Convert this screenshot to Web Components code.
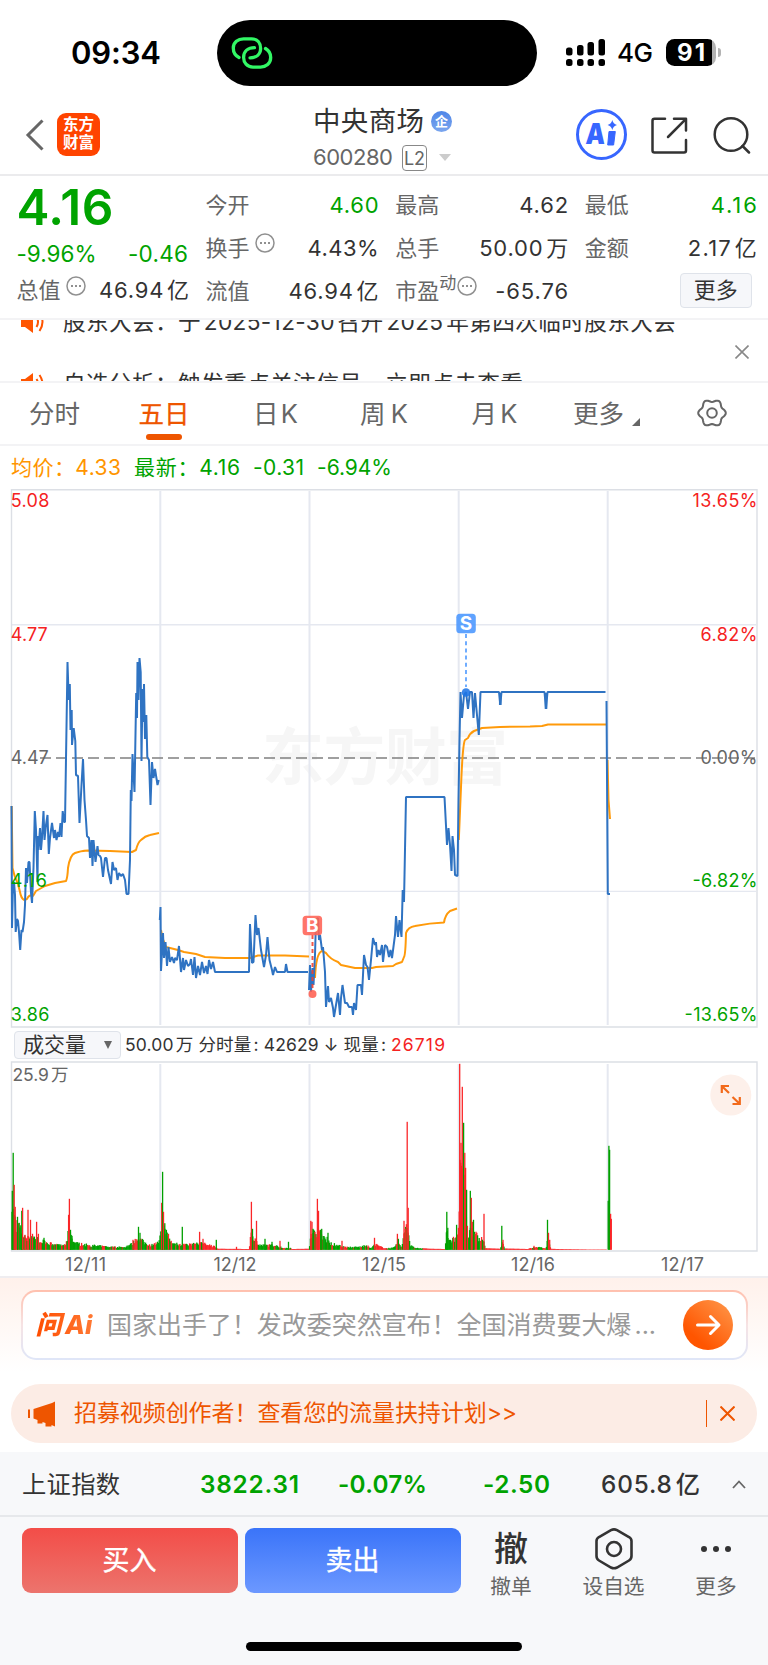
<!DOCTYPE html>
<html lang="zh-CN">
<head>
<meta charset="utf-8">
<title>中央商场 600280</title>
<style>
  body {
    margin: 0;
    width: 768px;
    background: #fff;
    font-family: Inter, "Noto Sans CJK SC", sans-serif;
    color: #333;
    text-autospace: normal;
  }
</style>
</head>
<body>
<stock-page></stock-page>

<script>
(function() {
  function define(name, html, connected) {
    var template = document.createElement('template');
    template.innerHTML = html;
    customElements.define(name, class extends HTMLElement {
      connectedCallback() {
        if (this.shadowRoot) return;
        var root = this.attachShadow({mode: 'open'});
        root.appendChild(document.importNode(template.content, true));
        if (connected) connected.call(this, root);
      }
    });
  }

  // inline text tracked out (or in) to a fixed width
  define('fit-text', `
    <style>
      :host { display: inline-block; white-space: nowrap; flex: none; }
      span { display: inline-block; }
    </style>
    <span><slot></slot></span>
  `, function(root) {
    var span = root.querySelector('span');
    var w = +this.getAttribute('w');
    var n = this.textContent.length;
    var gap = (w - span.getBoundingClientRect().width) / (n - 1);
    span.style.letterSpacing = gap.toFixed(3) + 'px';
    span.style.marginRight = (-gap).toFixed(3) + 'px';
    this.style.width = w + 'px';
  });

  define('status-bar', `
    <style>
      :host { display: flex; align-items: center; height: 93px; padding-top: 12px; box-sizing: border-box; color: #000; }
      .time { font-size: 31px; font-weight: 600; margin-left: 71px; width: 146px; line-height: 81px; }
      .island { width: 320px; height: 66px; border-radius: 33px; background: #000; display: flex; align-items: center; margin-top: 1px; }
      .island svg { margin-left: 13px; }
      .signal { margin-left: 28px; }
      .net { font-size: 26px; font-weight: 500; margin-left: 12px; width: 49px; }
      .battery { width: 50px; height: 27px; border-radius: 8.5px; background: linear-gradient(90deg, #000 46px, #b3b3b3 46px); color: #fff; font-size: 24px; font-weight: 700; line-height: 27px; }
      .battery fit-text { margin-left: 11px; }
      .nub { width: 3px; height: 9px; margin-left: 2px; border-radius: 0 4px 4px 0; background: #b3b3b3; }
    </style>
    <div class="time"><fit-text w="90">09:34</fit-text></div>
    <div class="island">
      <svg width="44" height="36" viewBox="230 35 44 36" fill="none" stroke="#32f765" stroke-width="3.3" stroke-linecap="round">
        <path d="M239 57.500C235 55.500 233.300 52 233.300 48C233.300 42.500 238 38.800 243.500 38.800H251.500C257.500 38.800 260.600 43 260.600 48.500C260.600 54 256.500 57.800 250 57.800"/>
        <path d="M265.500 48.500C269 50.500 270.700 53.500 270.700 57.500C270.700 63.500 266 67.100 260.500 67.100H253C247 67.100 243.600 62.500 243.600 57.500C243.600 51.500 248 47.700 254.500 47.700"/>
      </svg>
    </div>
    <svg class="signal" width="40" height="28" viewBox="565 38 40 28">
      <rect x="566" y="46.500" width="6.500" height="8" rx="2.500"/><rect x="577" y="44" width="6.500" height="10.500" rx="2.500"/>
      <rect x="587.500" y="41" width="6.500" height="13.500" rx="2.500"/><rect x="598.500" y="38" width="6.500" height="16.500" rx="2.500"/>
      <rect x="566" y="58" width="6.500" height="7" rx="2.500"/><rect x="577" y="58" width="6.500" height="7" rx="2.500"/>
      <rect x="587.500" y="58" width="6.500" height="7" rx="2.500"/><rect x="598.500" y="58" width="6.500" height="7" rx="2.500"/>
    </svg>
    <div class="net"><fit-text w="36">4G</fit-text></div>
    <div class="battery"><fit-text w="28">91</fit-text></div>
    <div class="nub"></div>
  `);

  define('stock-header', `
    <style>
      :host { display: flex; height: 83px; box-sizing: border-box; border-bottom: 2px solid #ebebed; }
      .left { width: 313px; display: flex; align-items: flex-start; padding-top: 20px; box-sizing: border-box; }
      .back { margin: 6px 13px 0 25px; }
      .logo { width: 43px; height: 43px; border-radius: 9px; background: #ff4400; color: #fff; font-size: 15.5px; font-weight: 700; line-height: 18px; text-align: center; padding-top: 3px; box-sizing: border-box; }
      .mid { flex: 1; }
      .name { display: flex; align-items: center; height: 28px; margin-top: 14px; font-size: 27.500px; color: #333; line-height: 28px; }
      .badge { width: 21px; height: 21px; border-radius: 50%; margin-left: 7px; background: linear-gradient(#4f86e8, #7ba6ee); color: #fff; font-size: 13px; font-weight: 700; line-height: 21px; text-align: center; }
      .code { display: flex; align-items: center; height: 27px; margin-top: 9px; font-size: 22px; color: #666; line-height: 27px; }
      .l2 { width: 23px; height: 24px; border: 1.5px solid #888; border-radius: 4px; margin: 0 12px 0 9px; font-size: 18px; line-height: 25px; text-align: center; }
      .tri { border: 6px solid transparent; border-top: 7px solid #ccc; border-bottom: 0; }
      .right { display: flex; align-items: flex-start; padding: 16px 17px 0 0; }
      .ai { width: 45px; height: 45px; border: 3px solid #3766ff; border-radius: 50%; margin-right: 24px; }
      .share { margin: 8px 25px 0 0; } .search { margin-top: 7px; }
    </style>
    <div class="left">
      <svg class="back" width="19" height="32" fill="none" stroke="#666" stroke-width="3"><path d="M17.500 1.500L3 16L17.500 30.500"/></svg>
      <div class="logo">东方<br>财富</div>
    </div>
    <div class="mid">
      <div class="name"><fit-text w="111">中央商场</fit-text><span class="badge">企</span></div>
      <div class="code"><fit-text w="80">600280</fit-text><span class="l2">L2</span><span class="tri"></span></div>
    </div>
    <div class="right">
      <div class="ai">
        <svg width="45" height="45" viewBox="0 0 45 45" fill="#3766ff">
          <text x="6.500" y="32.500" font-family="Inter" font-size="29" font-weight="900" textLength="19.500" lengthAdjust="spacingAndGlyphs" transform="skewX(-3) translate(1.500 0)">A</text>
          <path d="M30 19.500H36.300L34.600 33H28.700Z" stroke="#3766ff" stroke-linejoin="round"/>
          <path d="M33.300 8Q34.200 12.100 38 13Q34.200 13.900 33.300 18Q32.400 13.900 28.600 13Q32.400 12.100 33.300 8Z"/>
        </svg>
      </div>
      <svg class="share" width="37" height="37" fill="none" stroke="#333" stroke-width="2.500" stroke-linejoin="round" stroke-linecap="round">
        <path d="M14 1.800H3.500Q1.500 1.800 1.500 3.800V33.500Q1.500 35.500 3.500 35.500H33Q35 35.500 35 33.500V23M23 1.800H35V13.500M35 1.800L17 20"/>
      </svg>
      <svg class="search" width="38" height="38" fill="none" stroke="#333" stroke-width="2.500" stroke-linecap="round"><circle cx="18" cy="18.500" r="16.300"/><path d="M29.500 30L36 36.500"/></svg>
    </div>
  `);

  // dotted info bubble beside some labels
  define('info-dot', `
    <style>:host { display: block; width: 20px; height: 20px; } svg { display: block; }</style>
    <svg width="20" height="20" fill="none" stroke="#909090" stroke-width="1.500"><circle cx="10" cy="10" r="9"/><path d="M5 10H7M9 10H11M13 10H15" stroke-width="2"/></svg>
  `);

  define('quote-cell', `
    <style>
      :host { display: flex; align-items: center; height: 43px; font-size: 22px; line-height: 30px; color: #333; white-space: nowrap; }
      .label { color: #666; display: flex; align-items: center; }
      .value { margin-left: auto; margin-right: -1px; }
      :host([down]) .value { color: #00a300; }
    </style>
    <div class="label"><slot name="label"></slot></div>
    <div class="value"><slot></slot></div>
  `);

  define('quote-panel', `
    <style>
      :host { display: grid; grid-template-columns: 171.500px 172px 172px 171px; column-gap: 17.600px; height: 144px; padding: 7px 0 0 16.500px; box-sizing: border-box; border-bottom: 2px solid #f3f3f5; }
      .price { font-size: 49.500px; font-weight: 600; color: #00a300; height: 48px; line-height: 48px; }
      .diff { display: flex; justify-content: space-between; color: #00a300; font-size: 22.500px; height: 45px; line-height: 45px; }
      .total { height: 28px; }
      info-dot { margin: -9px 0 0 5px; }
      sup { font-size: 17px; line-height: 20px; margin-top: -16px; vertical-align: baseline; }
      sup + info-dot { margin-left: 1px; }
      .more { display: flex; justify-content: flex-end; height: 43px; align-items: center; padding-right: 4px; }
      .more span { width: 70px; height: 33px; border: 1.500px solid #dfe3ea; border-radius: 4px; background: #f6f7fa; text-align: center; font-size: 22px; line-height: 32px; }
    </style>
    <div>
      <div class="price"><fit-text w="97">4.16</fit-text></div>
      <div class="diff"><fit-text w="80">-9.96%</fit-text><fit-text w="60">-0.46</fit-text></div>
      <quote-cell class="total"><span slot="label">总值</span><info-dot slot="label"></info-dot><fit-text w="90">46.94亿</fit-text></quote-cell>
    </div>
    <div>
      <quote-cell down><span slot="label">今开</span><fit-text w="49">4.60</fit-text></quote-cell>
      <quote-cell><span slot="label">换手</span><info-dot slot="label"></info-dot><fit-text w="71">4.43%</fit-text></quote-cell>
      <quote-cell><span slot="label">流值</span><fit-text w="90">46.94亿</fit-text></quote-cell>
    </div>
    <div>
      <quote-cell><span slot="label">最高</span><fit-text w="49">4.62</fit-text></quote-cell>
      <quote-cell><span slot="label">总手</span><fit-text w="89">50.00万</fit-text></quote-cell>
      <quote-cell><span slot="label">市盈</span><sup slot="label">动</sup><info-dot slot="label"></info-dot><fit-text w="73">-65.76</fit-text></quote-cell>
    </div>
    <div>
      <quote-cell down><span slot="label">最低</span><fit-text w="46">4.16</fit-text></quote-cell>
      <quote-cell><span slot="label">金额</span><fit-text w="69">2.17亿</fit-text></quote-cell>
      <div class="more"><span>更多</span></div>
    </div>
  `);

  // two headlines caught half way through the vertical scroll
  define('news-ticker', `
    <style>
      :host { display: flex; height: 63px; box-sizing: border-box; border-bottom: 2px solid #f3f3f5; overflow: hidden; font-size: 22.700px; color: #333; }
      .list { flex: 1; margin-top: -16px; height: 95px; }
      .row { display: flex; align-items: center; height: 36px; padding-left: 20px; margin-bottom: 26px; white-space: nowrap; line-height: 36px; }
      .row svg { margin-right: 18px; }
      .close { margin: 25px 19px 0 0; }
    </style>
    <div class="list">
      <div class="row"><svg width="25" height="24"><path d="M1 7H5L13 1V23L5 17H1Z" fill="#ff5500"/><path d="M16.500 7Q19.500 12 16.500 17M19.500 3Q25.500 12 19.500 21" fill="none" stroke="#ff5500" stroke-width="2"/></svg><fit-text w="613">股东大会：于2025-12-30召开2025年第四次临时股东大会</fit-text></div>
      <div class="row"><svg width="25" height="24"><path d="M1 7H5L13 1V23L5 17H1Z" fill="#ff5500"/><path d="M16.500 7Q19.500 12 16.500 17M19.500 3Q25.500 12 19.500 21" fill="none" stroke="#ff5500" stroke-width="2"/></svg><fit-text w="460">自选分析：触发重点关注信号，立即点击查看</fit-text></div>
    </div>
    <svg class="close" width="14" height="14" stroke="#888" stroke-width="1.600"><path d="M.5.5L13.500 13.500M13.500.5L.5 13.500"/></svg>
  `);

  define('period-tabs', `
    <style>
      :host { display: grid; grid-template-columns: 109px 110px 113px 104px 117px 107px 1fr; height: 63px; box-sizing: border-box; border-bottom: 2px solid #f3f3f5; font-size: 25.500px; color: #666; line-height: 61px; }
      div { text-align: center; white-space: nowrap; }
      .on { color: #ee5500; -webkit-text-stroke: .3px #ee5500; display: flex; flex-direction: column; align-items: center; }
      .on::after { content: ""; width: 36px; height: 6px; border-radius: 3px; background: #ee5500; margin-top: -10px; }
      .more { display: flex; justify-content: center; }
      i { width: 0; height: 0; border-left: 8px solid transparent; border-bottom: 8px solid #666; margin: 35px 0 0 8px; }
      svg { margin: 15px 0 0 37px; }
    </style>
    <div>分时</div><div class="on"><span>五日</span></div>
    <div><fit-text w="45">日K</fit-text></div><div><fit-text w="48">周K</fit-text></div><div><fit-text w="46">月K</fit-text></div>
    <div class="more">更多<i></i></div>
    <svg width="30" height="30" viewBox="-15 -15 30 30" fill="none" stroke="#666" stroke-width="2"><circle r="4.800"/><path id="gear" stroke-linejoin="round"/></svg>
  `, function(root) {
    // six soft lobes
    var d = '';
    for (var a = 0; a <= 360; a += 6) {
      var r = 12.4 + 1.4 * Math.cos(6 * a * Math.PI / 180);
      d += (a ? 'L' : 'M') + (r * Math.cos(a * Math.PI / 180)).toFixed(2) + ' ' + (r * Math.sin(a * Math.PI / 180)).toFixed(2);
    }
    root.querySelector('#gear').setAttribute('d', d + 'Z');
  });

  define('price-legend', `
    <style>
      :host { display: flex; align-items: center; height: 43px; padding-left: 11px; font-size: 21px; color: #00a300; line-height: 43px; }
      .avg { color: #ff9500; }
      fit-text { margin-right: 13px; }
    </style>
    <fit-text class="avg" w="110">均价：4.33</fit-text><fit-text w="106">最新：4.16</fit-text><fit-text w="51">-0.31</fit-text><fit-text w="75">-6.94%</fit-text>
  `);

  define('price-chart', `
    <style>
      :host { display: block; height: 541px; }
      svg { display: block; font-family: Inter, "Noto Sans CJK SC", sans-serif; font-size: 18px; }
      .grid { stroke: #e5e8f0; stroke-width: 2; fill: none; }
      .grid.thin { stroke-width: 1.400; }
      .frame { stroke: #dcdfe5; stroke-width: 1.400; fill: none; }
      .up { fill: #f52222; } .down { fill: #00a300; } .flat { fill: #666; }
      .blue { stroke: #2f73c2; } .avg { stroke: #ff9a0a; }
      .blue, .avg { fill: none; stroke-width: 2; stroke-linejoin: bevel; }
    </style>
    <svg width="768" height="541" viewBox="0 489 768 541">
      <text x="262" y="780" font-size="62" font-weight="700" fill="#f6f6f6" textLength="246">东方财富</text>
      <path class="grid" d="M160.300 491V1025M309.500 491V1025M458.700 491V1025M607.700 491V1025"/>
      <path class="grid thin" d="M12 624.700H756M12 891.400H756"/>
      <path class="frame" d="M11.500 489.700H757V1027H11.500Z"/>
      <path d="M40 758H757" stroke="#808080" stroke-width="1.600" stroke-dasharray="11 5"/>
      <path class="avg" d="M11.700 806L12.500 868Q14 876 18 884L20 892Q21 898 24 900L27 899Q29 894 33 896L36 891L45 886L55 883L66 881Q67.500 878 68 868Q70 855 75 853Q80 851 88 850.500L110 851L132 852L136 850Q138 842 141 840Q145 836 150 835L159 833"/>
      <path class="avg" d="M161 930L162.500 938L166 947L178 950L184 952L196 954L205 957L225 958L250 958L258 955.500L285 955.500L309 956.500M315 978Q316 953 322 951L326 953Q330 959 338 962L341 965L355 968L372 968L376 967L393 966L396 964L402 962L404 957Q405.500 955 406 933Q408 927 415 926Q430 923 444 922.500Q445 915 450 911L457 908.500M458.800 840L461.500 775Q463 743 465 740L468 738Q470 733 474 731L482 728L500 727L530 726.500L542 726L548 724.500L606 724.500M607.500 760L608.500 800L610 819"/>
      <path class="blue" d="M11.500 806L12 928L13 884L14 882L15 895L15.700 932L17 919L18 921L19 932L20.200 950L21.500 930L22.500 932L24 922L25 905L26 868L27 883L28.500 862L29.500 862L31 893L32 903L33.500 868L34.800 811L36 830L37.500 882L38 836L38.500 850L40 828L41 850L42 838L43.500 811L44.500 840L46 825L47.500 815L48.800 854L50 838L52 823L54 838L55 830L56.500 840L58 832L59 837L60.500 823L61.500 837L62.700 811L64 822L65 822L66.300 740L67.500 662L68.700 700L69.800 684L70.500 730L71.700 710L72 745L73.700 728L75.300 741L76 775L78 776L79.500 823L81.500 785L83 759L84.500 800L86 820L87 836L89 838L90 858L91.500 840L92.500 866L93.500 840L95.500 862L97.500 846L98.500 855L100 856L101 858L103 877L105 858L106.500 858L108 870L111 884L112.500 862L114 870L116 868L117.500 880L119 873L121 876L123 874L125 880L126.500 894L128.500 894L130 860L130.800 790L131.500 801L132.500 754L134.500 792L136.200 693L137 718L137.500 662L138.500 700L139.500 658L140.700 672L141.500 761L142.500 689L143.500 722L144 684L145 739L146.300 715L147.300 757L149 760L150.500 805L152 762L153.500 778L155 769L157.500 785L158.700 780"/>
      <path class="blue" d="M159.800 920L160.500 907L161 971L163 933L164 958L165.500 942L167 966L168.500 947L170 962L172 957L174 963L175 958L177 960L179 946L181 972L183 958L184 970L186 960L188 966L190 964L191 959L193 975L194.500 957L196 978L198 966L200 975L202 962L204 973L206 966L207.500 974L209 960L211 969L213 962L215 972L249 972L250 924L252 963L253.500 962L255.500 915L257 935L258.500 928L261 950L264 967L266 955L267.500 937L269.500 960L272 970L273 975L275 967L277 972L285 972L286 964L287.500 972L308 972"/>
      <path class="blue" d="M309 990L310 965L311 992L312.500 968L313.500 985L315 955L316 920L318 918L319 940L320 935L322 950L323 947L325 972L326 1007L328 986L329 1002L331 998L333 1008L334 1017L336 1005L338 993L340 1015L341 998L342.500 985L345 1003L347 1003L349 1007L352 1007L353 1015L354 1003L356 1010L357.500 985L361 985L362 995L364 955L366 965L367.500 967L369 980L371 960L373 938L375 945L376 942L377 957L378.500 950L380 955L382 945L383 962L385 945L387 947L389 957L390.500 950L392 958L395 935L396 916L398 937L399.500 920L401.500 937L402.700 890L404 902L406 797L444.500 797L447 845L448.500 828L450 845L451.500 871L452.500 836L454 850L455 875L457.500 876L458.500 800L459.500 740L460.500 692L462 718L464 695L466 692L468 709L470 692L472 692L473.500 718L475 693L478.800 735L480.500 692L499 692L500.300 705L501.500 692L544.500 692L546 709L547.500 692L605.500 692M606.500 701L607.800 894L610 894"/>
      <path d="M500.200 693V705M546 693V709" stroke="#2f73c2" stroke-width="2.500"/>
      <g opacity=".88">
        <path d="M466 634V687" stroke="#4a97ff" stroke-width="1.800" stroke-dasharray="4 3.200"/>
        <circle cx="466" cy="692.500" r="4.300" fill="#1f76e6"/>
        <rect x="456.300" y="613.700" width="19.500" height="19.500" rx="3.500" fill="#4a97ff"/>
        <path d="M312.500 935V990" stroke="#f0402f" stroke-width="2" stroke-dasharray="4 3"/>
        <circle cx="312.500" cy="994" r="4" fill="#ff5f50"/>
        <rect x="302.600" y="915.700" width="19.500" height="19.500" rx="3.500" fill="#ff6355"/>
      </g>
      <g fill="#fff" font-weight="700" font-size="19" text-anchor="middle"><text x="466" y="630.300">S</text><text x="312.300" y="932.300">B</text></g>
      <g class="up"><text x="10.800" y="507" textLength="38.500">5.08</text><text x="10.800" y="641" textLength="37">4.77</text></g>
      <text class="flat" x="10.800" y="764" textLength="38">4.47</text>
      <g class="down"><text x="10.800" y="886.500" textLength="36">4.16</text><text x="10.800" y="1020.500" textLength="38.500">3.86</text></g>
      <g text-anchor="end"><text class="up" x="757.500" y="507" textLength="65">13.65%</text><text class="up" x="757.500" y="641" textLength="57">6.82%</text><text class="flat" x="757.500" y="764" textLength="57">0.00%</text><text class="down" x="757.500" y="886.500" textLength="65">-6.82%</text><text class="down" x="757.500" y="1020.500" textLength="73">-13.65%</text></g>
    </svg>
  `);

  define('volume-toolbar', `
    <style>
      :host { display: flex; align-items: center; height: 30px; padding-left: 14px; font-size: 17.500px; white-space: nowrap; color: #333; line-height: 28px; }
      .pick { display: flex; align-items: center; justify-content: space-between; width: 107px; height: 28px; box-sizing: border-box; border: 1.500px solid #dfe3ea; border-radius: 4px; background: #f6f7fa; padding: 0 8px 0 8px; margin-right: 4px; font-size: 21px; margin-top: -1px; }
      i { border: 4.500px solid transparent; border-top: 8px solid #666; border-bottom: 0; }
      .now { color: #f52222; margin-left: 5px; }
    </style>
    <div class="pick">成交量<i></i></div><fit-text w="261">50.00万 分时量: 42629 ↓ 现量:</fit-text><fit-text class="now" w="54">26719</fit-text>
  `);

  // [x, height, colour]: tall bars first, the low rest follows the envelope
  var SPIKES = [
    [12.3, 59, 'g'], [13.2, 97, 'g'], [14.2, 65, 'r'], [15.2, 43, 'r'], [17.5, 33, 'g'], [21.8, 39, 'g'], [22.6, 42, 'r'], [25, 15, 'r'], [28, 40, 'r'], [30.5, 30, 'r'], [32.5, 16, 'r'], [36.6, 28, 'r'], [38.4, 16, 'r'], [44, 12, 'g'], [68.6, 35, 'r'], [69.4, 51, 'r'], [70.5, 20, 'g'], [72, 14, 'g'],
    [133, 10, 'r'], [138.5, 23, 'g'], [140, 17, 'g'], [161.7, 47, 'r'], [162.6, 78, 'g'], [163.5, 38, 'r'], [165, 21, 'g'], [168.5, 16, 'r'], [182.3, 23, 'g'], [199.6, 18, 'r'], [203, 11, 'r'], [216.3, 10, 'g'], [236.5, 3, 'r'], [251.4, 48, 'r'], [252.5, 21, 'g'], [256.5, 29, 'r'], [265, 11, 'g'], [272, 8, 'g'], [280, 9, 'r'], [288.5, 8, 'g'],
    [310.8, 29, 'r'], [312, 28, 'r'], [313, 21, 'g'], [315, 18, 'r'], [317.4, 51, 'r'], [318.5, 39, 'r'], [320.7, 20, 'g'], [321.7, 21, 'g'], [328, 17, 'g'], [342, 9, 'r'], [374.5, 12, 'r'], [397.4, 16, 'r'], [398.4, 11, 'g'], [404, 29, 'r'], [405.2, 21, 'r'], [407.2, 128, 'r'], [408.2, 42, 'r'], [446.8, 38, 'g'], [447.8, 22, 'g'], [453.5, 13, 'r'], [456.6, 25, 'g'], [458.4, 22, 'r'],
    [459.7, 186, 'r'], [461, 107, 'r'], [462.3, 163, 'r'], [463.6, 127, 'g'], [464.8, 97, 'r'], [465.6, 82, 'r'], [466.6, 60, 'g'], [467.4, 24, 'r'], [470.3, 59, 'g'], [471.3, 52, 'r'], [472.3, 28, 'r'], [473.5, 30, 'g'], [484, 36, 'r'], [501.8, 24, 'g'], [503, 10, 'r'], [534, 4, 'r'], [547.5, 30, 'g'], [548.5, 17, 'r'], [549.7, 10, 'r'],
    [608.2, 49, 'g'], [608.9, 104, 'g'], [609.6, 100, 'g'], [610.6, 36, 'r'], [611.3, 31, 'r']
  ];
  var ENVELOPE = [
    [12, 50], [15, 32], [18, 26], [21, 22], [24, 13], [30, 15], [36, 13], [44, 9], [50, 7], [58, 5], [66, 5], [69, 25], [72, 14], [76, 7], [90, 5], [112, 3], [124, 3], [133, 7], [138, 14], [143, 9], [150, 5], [159, 8], [163, 32], [168, 13], [173, 7], [182, 6], [184, 6], [192, 6], [204, 7], [212, 4], [215, 4], [217.5, 1], [249, .8], [251, 18], [254, 14], [259, 5], [275, 5], [284, 2], [290, 2], [292, .8], [309, 1], [311, 18], [318, 20], [325, 14], [331, 7], [345, 3], [358, 3], [366, 5], [371, 2], [375, 6], [384, 2], [393, 2], [397, 8], [402, 3], [407, 35], [410, 6], [416, 2], [430, 1], [445, .8], [446.5, 22], [450, 11], [456, 12], [459, 20], [460, 90], [464, 75], [468, 15], [470, 20], [474, 18], [480, 13], [484, 11], [485.5, 1.500], [500, 1], [502, 8], [505, 1.200], [528, .8], [534, 3], [546, 2], [548, 12], [551, 1], [560, .7], [590, .3], [607, .3]
  ];

  define('volume-chart', `
    <style>
      :host { display: block; height: 218px; }
      svg { display: block; font-family: Inter, "Noto Sans CJK SC", sans-serif; font-size: 18px; fill: #666; }
      .grid { stroke: #e5e8f0; stroke-width: 2; fill: none; }
      .frame { stroke: #dcdfe5; stroke-width: 1.400; fill: none; }
      .r { fill: #fa2628; } .g { fill: #00a000; }
    </style>
    <svg width="768" height="218" viewBox="0 1060 768 218">
      <path class="grid" d="M160.300 1064V1249M309.500 1064V1249M458.700 1064V1249M607.700 1064V1249"/>
      <path class="frame" d="M11.500 1062H757V1251H11.500Z"/>
      <g id="bars"></g>
      <text x="12.500" y="1081" font-size="17.500" textLength="56">25.9万</text>
      <g text-anchor="middle"><text x="85.500" y="1270.500" textLength="41">12/11</text><text x="235" y="1270.500" textLength="43">12/12</text><text x="384" y="1270.500" textLength="44">12/15</text><text x="533" y="1270.500" textLength="44">12/16</text><text x="682.500" y="1270.500" textLength="43">12/17</text></g>
      <path d="M0 1277H768" stroke="#efedf0" stroke-width="2"/>
      <circle cx="730.800" cy="1095" r="20.500" fill="#fdf0ea"/>
      <path d="M721.800 1093V1086H729M722 1086.200L729 1093M739.800 1097V1104H732.500M739.600 1103.800L732.500 1097" fill="none" stroke="#f26a1b" stroke-width="2.200"/>
    </svg>
  `, function(root) {
    var seed = 7, out = '', k = 0, c = 'g';
    function rnd() { seed = (seed * 16807) % 2147483647; return seed / 2147483647; }
    function bar(x, h, c, w) {
      out += '<rect class="' + c + '" x="' + (x - w / 2).toFixed(2) + '" y="' + (1249.8 - h).toFixed(1) + '" width="' + w + '" height="' + h.toFixed(1) + '"/>';
    }
    for (var x = 12; x < 607; x += 0.8) {
      while (k < ENVELOPE.length - 2 && ENVELOPE[k + 1][0] < x) k++;
      var a = ENVELOPE[k], b = ENVELOPE[k + 1];
      var h = a[1] + (b[1] - a[1]) * Math.max(0, (x - a[0]) / (b[0] - a[0]));
      // thin trading at the limit price is nearly all on the buy side
      if (rnd() < 0.5) c = rnd() < 0.38 ? 'r' : 'g';
      if (h < 1.5 || h > 60) bar(x, h, 'r', 1.3);
      else bar(x, h * (0.6 + 0.55 * rnd()), c, 1.3);
    }
    SPIKES.forEach(function(s) { bar(s[0], s[1], s[2], 1.3); });
    root.querySelector('#bars').innerHTML = out;
  });

  define('ask-ai', `
    <style>
      :host { display: block; height: 94px; padding: 12px 20.500px 0; box-sizing: border-box; background: linear-gradient(#fff1eb, #fff); }
      .card { display: flex; align-items: center; height: 70px; box-sizing: border-box; border: 2px solid transparent; border-radius: 15px; padding: 0 13px 0 13px;
        background: linear-gradient(#fff, #fff) padding-box, linear-gradient(#ffc0ae, #f6e3e4 50%, #dfe6f8) border-box; }
      .logo { font-size: 26px; font-weight: 800; font-style: italic; line-height: 40px; color: #ff5a0f; width: 71.500px; background: linear-gradient(90deg, #ff4d00, #ff8340); -webkit-background-clip: text; background-clip: text; -webkit-text-fill-color: transparent; }
      .q { font-size: 25px; color: #999; line-height: 40px; }
      .go { margin-left: auto; }
    </style>
    <div class="card">
      <div class="logo"><fit-text w="57">问Ai</fit-text></div>
      <div class="q"><fit-text w="549">国家出手了！发改委突然宣布！全国消费要大爆...</fit-text></div>
      <svg class="go" width="50" height="50"><defs><linearGradient id="o" x1="1" y1="0" x2=".3" y2=".8"><stop offset="0" stop-color="#ff9a4d"/><stop offset="1" stop-color="#ff5500"/></linearGradient></defs><circle cx="25" cy="25" r="25" fill="url(#o)"/><path d="M14.500 25H35.500M27.500 16.500L36 25L27.500 33.500" fill="none" stroke="#fff" stroke-width="3" stroke-linecap="round" stroke-linejoin="round"/></svg>
    </div>
  `);

  define('promo-banner', `
    <style>
      :host { display: flex; align-items: center; height: 59px; margin: 0 11px; padding: 0 22px 0 17px; box-sizing: border-box; border-radius: 29.500px; background: #fcece5; color: #ee5500; font-size: 23px; line-height: 59px; }
      .horn { margin-right: 18px; }
      .bar { width: 1.500px; height: 27px; background: #ee5500; margin: 0 13px 0 auto; }
    </style>
    <svg class="horn" width="28" height="26" fill="#ee5500"><path d="M0 8.500H2V17H0ZM5.500 8L24 2L27 .5V25.500L23.500 24V25.500H17.500V22L14.500 21V22.500H9.500V19L5.500 17.500Z"/></svg>
    <fit-text w="443">招募视频创作者！查看您的流量扶持计划&gt;&gt;</fit-text>
    <div class="bar"></div>
    <svg width="15" height="15" stroke="#ee5500" stroke-width="2"><path d="M.5.5L14.500 14.500M14.500.5L.5 14.500"/></svg>
  `);

  define('index-bar', `
    <style>
      :host { display: flex; align-items: center; height: 65px; padding: 1px 22px 0 22px; box-sizing: border-box; border-bottom: 2px solid #e6e8eb; font-size: 24.300px; font-weight: 500; line-height: 62px; color: #333; }
      .down { color: #00a300; font-weight: 600; }
      .n { font-weight: 400; }
    </style>
    <fit-text class="n" w="98">上证指数</fit-text>
    <fit-text class="down" w="99" style="margin-left:80px">3822.31</fit-text>
    <fit-text class="down" w="89" style="margin-left:39px">-0.07%</fit-text>
    <fit-text class="down" w="67" style="margin-left:56px">-2.50</fit-text>
    <fit-text w="99" style="margin-left:51px">605.8亿</fit-text>
    <svg width="14" height="9" fill="none" stroke="#666" stroke-width="1.800" style="margin-left:auto"><path d="M1 8L7 1.500L13 8"/></svg>
  `);

  define('trade-bar', `
    <style>
      :host { display: flex; align-items: flex-start; height: 148px; padding: 11px 0 0 21.500px; box-sizing: border-box; position: relative; }
      .btn { width: 216px; height: 65px; border-radius: 9px; color: #fff; font-size: 27px; line-height: 66px; -webkit-text-stroke: .4px #fff; text-align: center; margin-right: 7px; background: linear-gradient(#f34d48, #ec746d); }
      .sell { background: linear-gradient(#3a74f9, #6c98ff); }
      .act { display: flex; flex-direction: column; align-items: center; width: 87px; font-size: 20.700px; color: #666; line-height: 30px; white-space: nowrap; }
      .act.wide { width: 118px; }
      .ico { height: 43px; display: flex; align-items: center; font-size: 34px; color: #333; font-weight: 500; margin: -1px 0 2px; }
      .home { position: absolute; left: 246px; bottom: 14.500px; width: 276px; height: 9px; border-radius: 5px; background: #000; }
    </style>
    <div class="btn">买入</div><div class="btn sell">卖出</div>
    <div class="act"><div class="ico">撤</div>撤单</div>
    <div class="act wide"><div class="ico"><svg width="38" height="42" fill="none" stroke="#333" stroke-width="2.600"><path d="M16 2.200Q19 .6 22 2.200L34 9Q36.500 10.500 36.500 13V28Q36.500 31 34 32.500L22 39.500Q19 41 16 39.500L4 32.500Q1.500 31 1.500 28V13Q1.500 10.500 4 9Z"/><circle cx="19" cy="21" r="7"/></svg></div>设自选</div>
    <div class="act"><div class="ico"><svg width="32" height="8" fill="#333"><circle cx="4" cy="4" r="3"/><circle cx="16" cy="4" r="3"/><circle cx="28" cy="4" r="3"/></svg></div>更多</div>
    <div class="home"></div>
  `);

  define('stock-page', `
    <style>
      :host { display: flex; flex-direction: column; width: 768px; height: 1665px; overflow: hidden; background: #fff; }
      :host > *, status-bar, stock-header, quote-panel, news-ticker, period-tabs, price-legend, price-chart, volume-toolbar, volume-chart, ask-ai, promo-banner, footer { flex: none; }
      promo-banner { margin-top: 12px; }
      footer { margin-top: 9px; background: #f7f8fa; }
    </style>
    <status-bar></status-bar>
    <stock-header></stock-header>
    <quote-panel></quote-panel>
    <news-ticker></news-ticker>
    <period-tabs></period-tabs>
    <price-legend></price-legend>
    <price-chart></price-chart>
    <volume-toolbar></volume-toolbar>
    <volume-chart></volume-chart>
    <ask-ai></ask-ai>
    <promo-banner></promo-banner>
    <footer>
      <index-bar></index-bar>
      <trade-bar></trade-bar>
    </footer>
  `);
})();
</script>
</body>
</html>
